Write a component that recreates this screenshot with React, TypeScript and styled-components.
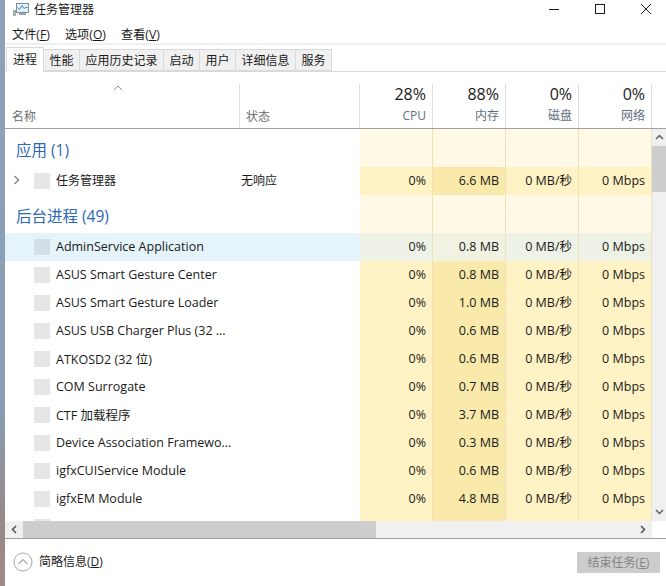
import React from 'react';
import styled, { createGlobalStyle } from 'styled-components';

const GlobalStyle = createGlobalStyle`
  html, body {
    margin: 0;
    padding: 0;
    background: #fff;
  }
  body {
    font-family: "Open Sans", "Noto Sans CJK SC", sans-serif;
  }
`;

const columns = '235px 120px 73px 73px 73px 73px';

interface Proc {
  name: string;
  status?: string;
  mem: string;
  expandable?: boolean;
  selected?: boolean;
  cjk?: boolean;
}

const apps: Proc[] = [{ name: '任务管理器', status: '无响应', mem: '6.6 MB', expandable: true, cjk: true }];

const background: Proc[] = [
  { name: 'AdminService Application', mem: '0.8 MB', selected: true },
  { name: 'ASUS Smart Gesture Center', mem: '0.8 MB' },
  { name: 'ASUS Smart Gesture Loader', mem: '1.0 MB' },
  { name: 'ASUS USB Charger Plus (32 ...', mem: '0.6 MB' },
  { name: 'ATKOSD2 (32 位)', mem: '0.6 MB' },
  { name: 'COM Surrogate', mem: '0.7 MB' },
  { name: 'CTF 加载程序', mem: '3.7 MB' },
  { name: 'Device Association Framewo...', mem: '0.3 MB' },
  { name: 'igfxCUIService Module', mem: '0.6 MB' },
  { name: 'igfxEM Module', mem: '4.8 MB' },
];

function ProcessRow({ proc }: { proc: Proc }) {
  return (
    <Row $selected={proc.selected}>
      <NameCell $cjk={proc.cjk}>
        <Expander>
          {proc.expandable && (
            <svg width="8" height="10" viewBox="0 0 8 10">
              <path d="M1.5 1l4 4-4 4" fill="none" stroke="#8a8a8a" strokeWidth="1.5" />
            </svg>
          )}
        </Expander>
        <ProcIcon $selected={proc.selected} />
        <span>{proc.name}</span>
      </NameCell>
      <StatusCell>{proc.status}</StatusCell>
      <DataCell $heat="cpu" $selected={proc.selected}>0%</DataCell>
      <DataCell $heat="mem" $selected={proc.selected}>{proc.mem}</DataCell>
      <DataCell $heat="io" $selected={proc.selected}>0 MB/秒</DataCell>
      <DataCell $heat="io" $selected={proc.selected}>0 Mbps</DataCell>
    </Row>
  );
}

// the row under the scrollbar only shows the top of its icon, no text
function PeekRow() {
  return (
    <Row>
      <NameCell>
        <Expander />
        <ProcIcon />
      </NameCell>
      <span />
      <DataCell $heat="cpu" />
      <DataCell $heat="mem" />
      <DataCell $heat="io" />
      <DataCell $heat="io" />
    </Row>
  );
}

function GroupRow({ title }: { title: string }) {
  return (
    <Group>
      <GroupTitle>{title}</GroupTitle>
      <span />
      <GroupHeat />
      <GroupHeat />
      <GroupHeat />
      <GroupHeat />
    </Group>
  );
}

export default function App() {
  return (
    <Desktop>
      <GlobalStyle />
      <Edge />
      <Window>
        <TitleBar>
          <AppIcon width="16" height="15" viewBox="0 0 16 15">
            <rect x="0" y="8" width="3" height="6" fill="#9fb0a8" />
            <rect x="3.5" y="1.5" width="12" height="9" fill="#e3f0f8" stroke="#7b8b98" />
            <path d="M4.5 5.5l2 2 2.5-4 2 3 1.5-1h2" fill="none" stroke="#3f8cc4" />
            <rect x="6" y="11" width="7" height="2" fill="#9aa5ae" />
          </AppIcon>
          <TitleText>任务管理器</TitleText>
          <WindowButtons>
            <svg width="12" height="12" viewBox="0 0 12 12">
              <path d="M1 6.5h10" stroke="#1a1a1a" />
            </svg>
            <svg width="12" height="12" viewBox="0 0 12 12">
              <rect x="1.5" y="1.5" width="9" height="9" fill="none" stroke="#1a1a1a" />
            </svg>
            <svg width="12" height="12" viewBox="0 0 12 12">
              <path d="M1 1l10 10M11 1L1 11" stroke="#1a1a1a" />
            </svg>
          </WindowButtons>
        </TitleBar>
        <MenuBar>
          <MenuItem>文件(<u>F</u>)</MenuItem>
          <MenuItem>选项(<u>O</u>)</MenuItem>
          <MenuItem>查看(<u>V</u>)</MenuItem>
        </MenuBar>
        <TabStrip>
          <Tab $active>进程</Tab>
          <Tab>性能</Tab>
          <Tab>应用历史记录</Tab>
          <Tab>启动</Tab>
          <Tab>用户</Tab>
          <Tab>详细信息</Tab>
          <Tab>服务</Tab>
        </TabStrip>
        <TableArea>
          <HeaderRow>
            <HeaderLabel>
              <SortArrow width="10" height="6" viewBox="0 0 10 6">
                <path d="M1 5l4-4 4 4" fill="none" stroke="#8f8f8f" />
              </SortArrow>
              名称
            </HeaderLabel>
            <HeaderLabel>状态</HeaderLabel>
            <HeaderStat><big>28%</big><small>CPU</small></HeaderStat>
            <HeaderStat><big>88%</big><small>内存</small></HeaderStat>
            <HeaderStat><big>0%</big><small>磁盘</small></HeaderStat>
            <HeaderStat><big>0%</big><small>网络</small></HeaderStat>
          </HeaderRow>
          <Body>
            <Rows>
              <GroupRow title="应用 (1)" />
              {apps.map(p => <ProcessRow key={p.name} proc={p} />)}
              <GroupRow title="后台进程 (49)" />
              {background.map(p => <ProcessRow key={p.name} proc={p} />)}
              <PeekRow />
            </Rows>
            <VScroll>
              <ScrollArrow width="9" height="6" viewBox="0 0 9 6">
                <path d="M1 5l3.5-3.5L8 5" fill="none" stroke="#606060" strokeWidth="1.5" />
              </ScrollArrow>
              <VThumb />
              <VTrack />
              <ScrollArrow width="9" height="6" viewBox="0 0 9 6">
                <path d="M1 1l3.5 3.5L8 1" fill="none" stroke="#606060" strokeWidth="1.5" />
              </ScrollArrow>
            </VScroll>
          </Body>
          <HScroll>
            <HArrow>
              <svg width="6" height="9" viewBox="0 0 6 9">
                <path d="M5 1L1.5 4.5 5 8" fill="none" stroke="#505050" strokeWidth="1.5" />
              </svg>
            </HArrow>
            <HThumb />
            <HTrack />
            <HArrow>
              <svg width="6" height="9" viewBox="0 0 6 9">
                <path d="M1 1l3.5 3.5L1 8" fill="none" stroke="#505050" strokeWidth="1.5" />
              </svg>
            </HArrow>
          </HScroll>
        </TableArea>
        <Footer>
          <Fewer>
            <svg width="20" height="20" viewBox="0 0 20 20">
              <circle cx="10" cy="10" r="9" fill="none" stroke="#a8a8a8" />
              <path d="M5.5 12l4.5-4.5 4.5 4.5" fill="none" stroke="#a8a8a8" strokeWidth="1.2" />
            </svg>
            <FewerText>简略信息(<u>D</u>)</FewerText>
          </Fewer>
          <EndTask disabled>结束任务(<u>E</u>)</EndTask>
        </Footer>
      </Window>
    </Desktop>
  );
}

const Desktop = styled.div`
  display: flex;
  width: 666px;
  height: 586px;
  overflow: hidden;
  color: #1a1a1a;
  font-size: 12px;
`;

const Edge = styled.div`
  flex: 0 0 5px;
  background: linear-gradient(#8da2b8 0%, #8a9db4 70%, #97888a 88%, #a08a8a 100%);
`;

const Window = styled.div`
  flex: 1;
  min-width: 0;
  display: flex;
  flex-direction: column;
  background: #fff;
`;

const TitleBar = styled.div`
  flex: 0 0 24px;
  display: flex;
  align-items: center;
  padding: 0 0 6px 8px;
  box-sizing: border-box;
`;

const AppIcon = styled.svg`
  margin-right: 5px;
`;

const TitleText = styled.div`
  font-size: 12px;
`;

const WindowButtons = styled.div`
  margin-left: auto;
  display: flex;
  gap: 34px;
  padding-right: 14px;
`;

const MenuBar = styled.div`
  flex: 0 0 16px;
  display: flex;
  align-items: center;
  gap: 15px;
  padding: 3px 0 0 7px;
  border-bottom: 2px solid #f0f0f0;
  box-sizing: content-box;
  font-size: 12.2px;
  line-height: 16px;
`;

const MenuItem = styled.span`
  white-space: nowrap;
`;

const TabStrip = styled.div`
  flex: 0 0 25px;
  display: flex;
  align-items: flex-end;
  border-bottom: 1px solid #d9d9d9;
  box-sizing: border-box;
  padding-left: 1px;
  margin-top: 2px;
`;

const Tab = styled.div<{ $active?: boolean }>`
  height: ${p => (p.$active ? 25 : 22)}px;
  margin-bottom: ${p => (p.$active ? -1 : 0)}px;
  padding: 0 ${p => (p.$active ? '6px 2px' : '5.5px 1px')};
  display: flex;
  align-items: center;
  box-sizing: border-box;
  font-size: 12px;
  white-space: nowrap;
  background: ${p => (p.$active ? '#fff' : '#f0f0f0')};
  border: 1px solid #d9d9d9;
  border-left-width: ${p => (p.$active ? 1 : 0)}px;
  border-bottom-width: ${p => (p.$active ? 0 : 1)}px;
`;

const TableArea = styled.div`
  flex: 0 0 466px;
  display: flex;
  flex-direction: column;
  border-bottom: 1px solid #a0a0a0;
  box-sizing: content-box;
  min-height: 0;
`;

const HeaderRow = styled.div`
  flex: 0 0 57px;
  display: grid;
  grid-template-columns: ${columns};
  border-bottom: 1px solid #a0a0a0;
  box-sizing: border-box;
  padding-top: 12px;
`;

const HeaderLabel = styled.div`
  position: relative;
  display: flex;
  align-items: flex-end;
  padding: 0 0 3px 7px;
  border-right: 1px solid #dedede;
  color: #6d6d6d;
  font-size: 12px;

  & + & {
    padding-left: 6px;
  }
`;

const SortArrow = styled.svg`
  position: absolute;
  left: 108px;
  top: 1px;
`;

const HeaderStat = styled.div`
  display: flex;
  flex-direction: column;
  align-items: flex-end;
  justify-content: flex-end;
  padding: 0 6px 3px 0;
  border-right: 1px solid #dedede;

  big {
    font-size: 16px;
    line-height: 20px;
    margin-bottom: 3px;
    color: #1a1a1a;
  }
  small {
    font-size: 12px;
    line-height: 18px;
    color: #5e6f80;
  }
`;

const Body = styled.div`
  flex: 1;
  min-height: 0;
  display: flex;
`;

const Rows = styled.div`
  flex: 0 0 647px;
  overflow: hidden;
`;

const Group = styled.div`
  height: 38px;
  display: grid;
  grid-template-columns: ${columns};
`;

const GroupTitle = styled.div`
  display: flex;
  align-items: flex-end;
  padding: 0 0 7px 11px;
  color: #2c67b4;
  font-size: 15.5px;
  line-height: 20px;
  white-space: nowrap;
`;

const GroupHeat = styled.div`
  background: #fff9e5;
  border-right: 1px solid #f0e2b8;
`;

const Row = styled.div<{ $selected?: boolean }>`
  height: 28px;
  display: grid;
  grid-template-columns: ${columns};
  background: ${p => (p.$selected ? '#e5f3fb' : 'transparent')};
`;

const NameCell = styled.div<{ $cjk?: boolean }>`
  display: flex;
  align-items: center;
  white-space: nowrap;
  overflow: hidden;
  font-size: ${p => (p.$cjk ? 12 : 12.5)}px;

  span {
    margin-top: ${p => (p.$cjk ? -3 : -2)}px;
  }
`;

const Expander = styled.div`
  flex: 0 0 29px;
  display: flex;
  justify-content: center;
  padding: 0 5px 2px 0;
  box-sizing: border-box;
`;

const ProcIcon = styled.div<{ $selected?: boolean }>`
  flex: 0 0 16px;
  height: 16px;
  margin-right: 6px;
  background: ${p => (p.$selected ? '#d4dee6' : '#e6e6e6')};
`;

const StatusCell = styled.div`
  display: flex;
  align-items: center;
  padding: 0 0 3px 1px;
  font-size: 12px;
`;

const heatColours: Record<string, string> = {
  cpu: '#fff3c5',
  mem: '#f9e9ab',
  io: '#fff3c5',
};

const selectedColours: Record<string, string> = {
  cpu: '#eef2e6',
  mem: '#f1f2e2',
  io: '#eef2e6',
};

const DataCell = styled.div<{ $heat: string; $selected?: boolean }>`
  display: flex;
  align-items: center;
  justify-content: flex-end;
  padding: 0 6px 0 0;
  background: ${p => (p.$selected ? selectedColours[p.$heat] : heatColours[p.$heat])};
  border-right: 1px solid #f0e2b8;
  font-size: 12.5px;
  line-height: 16px;
  white-space: nowrap;
`;

const VScroll = styled.div`
  flex: 1;
  display: flex;
  flex-direction: column;
  align-items: center;
  background: #f0f0f0;
`;

const ScrollArrow = styled.svg`
  flex: 0 0 6px;
  margin: 5px 0 6px;
`;

const VThumb = styled.div`
  flex: 0 0 46px;
  align-self: stretch;
  background: #cdcdcd;
`;

const VTrack = styled.div`
  flex: 1;
`;

const HScroll = styled.div`
  flex: 0 0 17px;
  display: flex;
  background: #f0f0f0;
  margin-right: 14px;
`;

const HArrow = styled.div`
  flex: 0 0 18px;
  display: flex;
  align-items: center;
  justify-content: center;
`;

const HThumb = styled.div`
  flex: 0 0 353px;
  background: #cdcdcd;
`;

const HTrack = styled.div`
  flex: 1;
`;

const Footer = styled.div`
  flex: 1;
  display: flex;
  align-items: center;
  justify-content: space-between;
  padding: 0 6px 0 8px;
`;

const Fewer = styled.div`
  display: flex;
  align-items: center;
  gap: 6px;
  font-size: 12px;
  margin-top: -1px;
`;

const FewerText = styled.span`
  margin-top: -2px;
  white-space: nowrap;
`;

const EndTask = styled.button`
  width: 83px;
  height: 21px;
  padding: 0 0 2px;
  border: 1px solid #cccccc;
  background: #cccccc;
  color: #858585;
  font-family: inherit;
  font-size: 12px;
  white-space: nowrap;
`;
